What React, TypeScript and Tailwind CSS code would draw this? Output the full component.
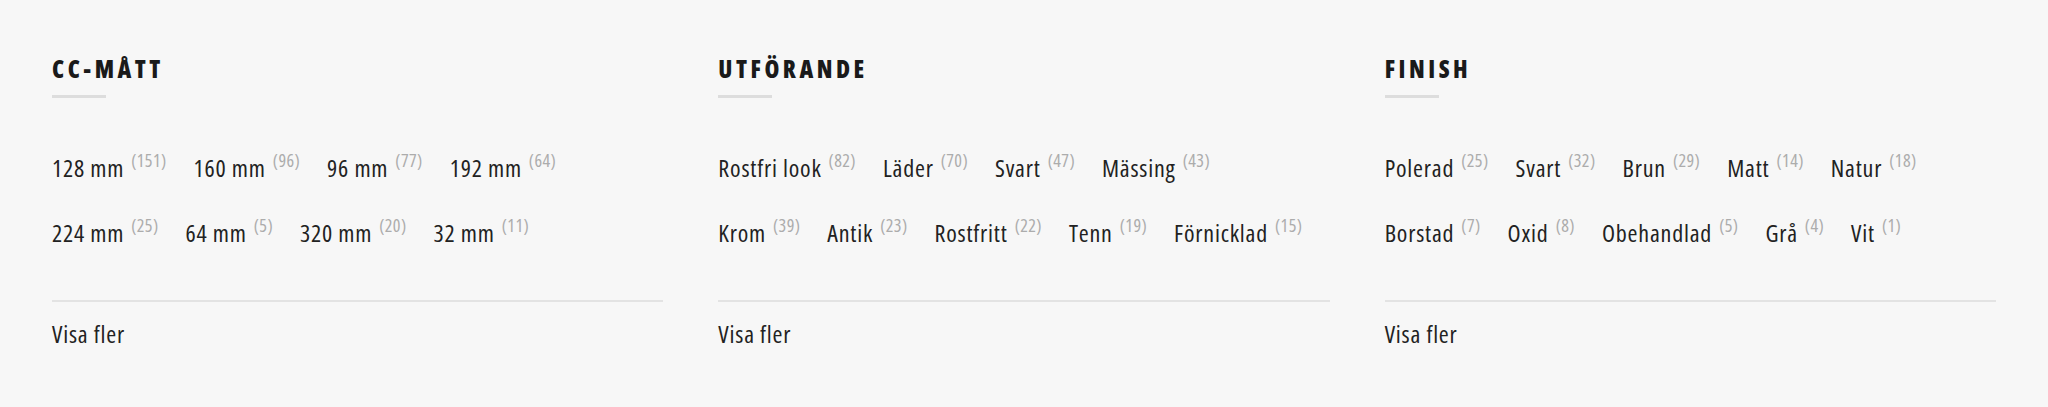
type Option = { label: string; count: number };
type Group = { title: string; options: Option[] };

const groups: Group[] = [
  {
    title: "CC-MÅTT",
    options: [
      { label: "128 mm", count: 151 },
      { label: "160 mm", count: 96 },
      { label: "96 mm", count: 77 },
      { label: "192 mm", count: 64 },
      { label: "224 mm", count: 25 },
      { label: "64 mm", count: 5 },
      { label: "320 mm", count: 20 },
      { label: "32 mm", count: 11 },
    ],
  },
  {
    title: "UTFÖRANDE",
    options: [
      { label: "Rostfri look", count: 82 },
      { label: "Läder", count: 70 },
      { label: "Svart", count: 47 },
      { label: "Mässing", count: 43 },
      { label: "Krom", count: 39 },
      { label: "Antik", count: 23 },
      { label: "Rostfritt", count: 22 },
      { label: "Tenn", count: 19 },
      { label: "Förnicklad", count: 15 },
    ],
  },
  {
    title: "FINISH",
    options: [
      { label: "Polerad", count: 25 },
      { label: "Svart", count: 32 },
      { label: "Brun", count: 29 },
      { label: "Matt", count: 14 },
      { label: "Natur", count: 18 },
      { label: "Borstad", count: 7 },
      { label: "Oxid", count: 8 },
      { label: "Obehandlad", count: 5 },
      { label: "Grå", count: 4 },
      { label: "Vit", count: 1 },
    ],
  },
];

// rows break after this many options, as on the site
const firstRow = [4, 4, 5];

const FilterGroup = ({ group, split }: { group: Group; split: number }) => {
  const rows = [group.options.slice(0, split), group.options.slice(split)];
  return (
    <div className="flex flex-col pt-[57px]">
      <h3 className="text-[24px] leading-[24px] font-extrabold tracking-[3.5px] text-[#1a1a1a] font-stretch-condensed">
        {group.title}
      </h3>
      <div className="mt-[14px] h-[3px] w-[54px] bg-[#dddddd]" />
      <div className="mt-[55px] flex flex-col gap-[35px]">
        {rows.map((row, i) => (
          <div
            key={i}
            className="flex h-[30px] gap-x-[27px] text-[24px] leading-[30px] tracking-[0.8px] text-[#222222] font-stretch-condensed"
          >
            {row.map((o) => (
              <a key={o.label} href="#" className="whitespace-nowrap">
                {o.label}
                <span className="ml-[7px] align-[10px] text-[18px] leading-[0] tracking-[0.4px] text-[#acacac]">
                  ({o.count})
                </span>
              </a>
            ))}
          </div>
        ))}
      </div>
      <div className="mt-[52px] h-[2px] w-full bg-[#e3e3e3]" />
      <a
        href="#"
        className="mt-[17px] text-[24px] leading-[30px] tracking-[0.8px] text-[#222222] font-stretch-condensed"
      >
        Visa fler
      </a>
    </div>
  );
};

export default function App() {
  return (
    <div className="h-[407px] w-full bg-[#f7f7f7] px-[52px] font-['Open_Sans',sans-serif]">
      <div className="grid grid-cols-3 gap-x-[55px]">
        {groups.map((g, i) => (
          <FilterGroup key={g.title} group={g} split={firstRow[i]} />
        ))}
      </div>
    </div>
  );
}
